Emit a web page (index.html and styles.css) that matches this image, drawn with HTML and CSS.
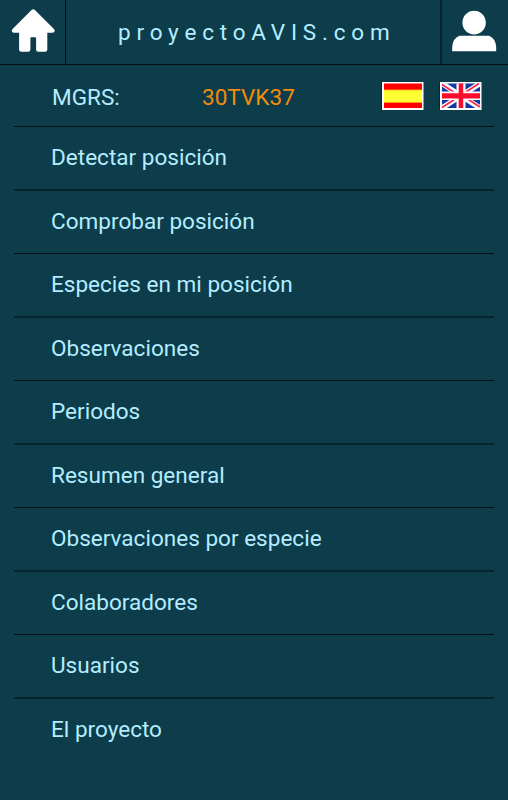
FILE: index.html
```html
<!DOCTYPE html>
<html lang="es">
<head>
<meta charset="utf-8">
<title>proyectoAVIS.com</title>
<link rel="stylesheet" href="styles.css">
</head>
<body>
<header class="top">
  <a class="home" aria-label="Inicio"><svg width="66" height="64" viewBox="0 0 66 64"><path fill="#fff" d="M31.5 10.1Q33.2 8.2 34.9 10.1L53.7 28.8C55.3 30.5 55 32.7 52.5 32.7H47.3V49.6Q47.3 51.8 45.1 51.8H38.3Q36.1 51.8 36.1 49.6V38.3Q36.1 37.3 35.1 37.3H31.4Q30.4 37.3 30.4 38.3V49.6Q30.4 51.8 28.2 51.8H21.3Q19.1 51.8 19.1 49.6V32.7H14C11.5 32.7 11.2 30.5 12.8 28.8Z"/></svg></a>
  <h1 class="brand">proyectoAVIS.com</h1>
  <a class="user" aria-label="Usuario"><svg width="66" height="64" viewBox="0 0 66 64"><ellipse fill="#fff" cx="32.1" cy="22.7" rx="11.7" ry="11.9"/><path fill="#fff" d="M10.2 51.3V47Q10.6 38.5 17.5 35.8H47Q53.6 38.5 54.2 47V51.3Z"/></svg></a>
</header>
<main class="panel">
  <div class="locate">
    <span class="label">MGRS:</span>
    <span class="code">30TVK37</span>
    <div class="flags">
      <svg class="flag" width="42" height="28" viewBox="0 0 42 28"><path fill="#fff" d="M0 0H41.5V28H0Z"/><path fill="#f00" d="M2 1.5H40V26H2Z"/><path fill="#ff9c10" d="M2 7.4H40V21H2Z"/><path fill="#ff3" d="M2 8.2H40V20H2Z"/></svg>
      <svg class="flag" width="42" height="28" viewBox="0 0 42 28"><path fill="#fff" d="M0 0H41.5V28H0Z"/><path fill="#1239a0" d="M2 1.5H40V26H2Z"/><path stroke="#fff" stroke-width="5.2" d="M2 1.5L40 26M40 1.5L2 26"/><path stroke="#f52a4a" stroke-width="1.7" d="M2 2.5L19 13.5M39 1.5L22 12.5M2 25.5L19 14.5M40 25L23 14"/><path fill="#fff" d="M2 9.5H40V18H2ZM16.5 1.5H25.5V26H16.5Z"/><path fill="#ff0a2a" d="M2 11.2H40V16.5H2ZM18.7 1.5H23.2V26H18.7Z"/></svg>
    </div>
  </div>
  <nav class="menu">
    <a>Detectar posición</a>
    <a>Comprobar posición</a>
    <a>Especies en mi posición</a>
    <a>Observaciones</a>
    <a>Periodos</a>
    <a>Resumen general</a>
    <a>Observaciones por especie</a>
    <a>Colaboradores</a>
    <a>Usuarios</a>
    <a>El proyecto</a>
  </nav>
</main>
</body>
</html>
```
FILE: styles.css
```css
* { box-sizing: border-box; }
body {
  margin: 0;
  height: 800px;
  overflow: hidden;
  background: #0d3c4a;
  color: #b3edff;
  font: 22.55px/27px Roboto, sans-serif;
}
svg { display: block; }
.top {
  display: grid;
  grid-template-columns: 66px 374px 68px;
  height: 65px;
  border-bottom: 1px solid #021014;
}
.home { border-right: 1px solid #021014; }
.user { border-left: 2px solid #06242d; }
.brand {
  margin: 0;
  padding-left: 52px;
  font-size: 22.5px;
  font-weight: 400;
  line-height: 64px;
  letter-spacing: 5.8px;
  white-space: nowrap;
}
.panel { padding: 0 14px; }
.locate {
  display: grid;
  grid-template-columns: 150px 180px 1fr;
  align-items: center;
  height: 61px;
  padding: 4px 0 0 38px;
}
.code { color: #f28c0a; }
.flags {
  display: flex;
  gap: 16px;
  margin-top: -3px;
}
.flag { box-shadow: -1px 0 #062832; }
.menu a {
  display: block;
  height: 63px;
  padding: 17px 0 0 37px;
  border-top: 1px solid #021117;
}
/* Alternate rows carry a softer, thicker rule. */
.menu a:nth-child(even) {
  height: 64px;
  border-top: 2px solid #06252e;
}
```
